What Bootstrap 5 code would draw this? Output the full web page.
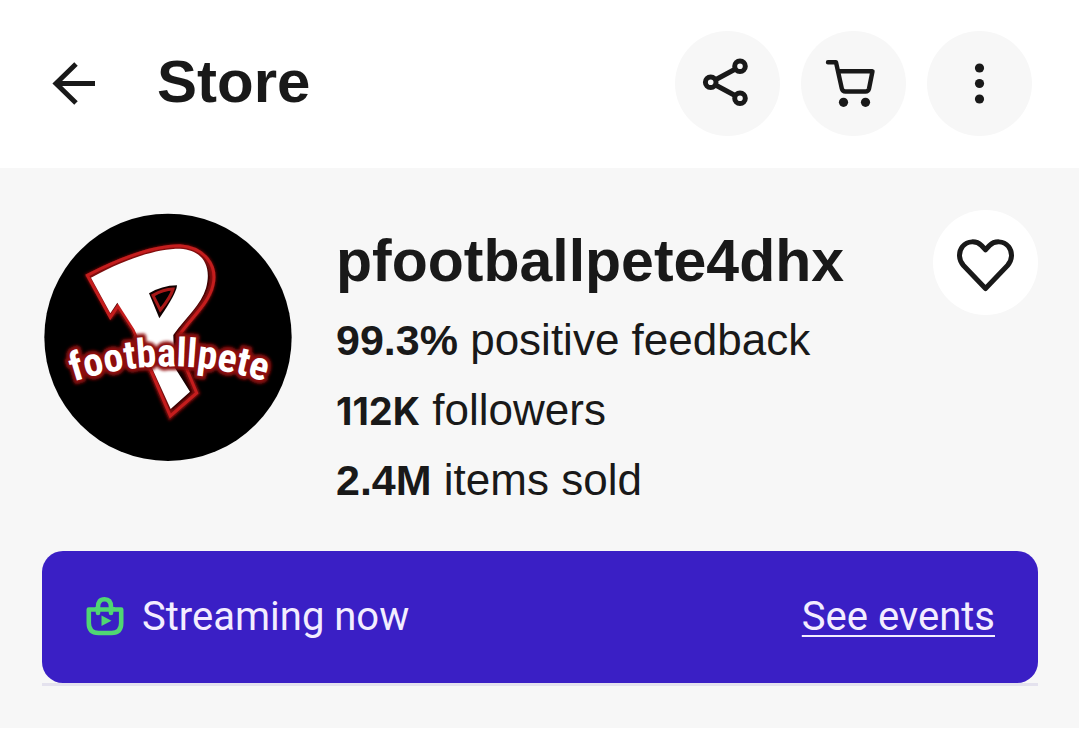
<!DOCTYPE html>
<html lang="en">
<head>
<meta charset="utf-8">
<meta name="viewport" content="width=device-width, initial-scale=1">
<title>Store</title>
<link href="https://cdn.jsdelivr.net/npm/bootstrap@5.3.0/dist/css/bootstrap.min.css" rel="stylesheet">
<style>
  body { font-family: "Liberation Sans", Arial, sans-serif; color: #191919; background: #fff; }
  .store-bar { padding: 31px 47px 32px 42px; }
  .back-btn { width: 63px; height: 63px; }
  .page-title, .seller-name { font-size: 60px; line-height: 70px; font-weight: 700; }
  .page-title { padding-left: 52px; margin-top: -4px; }
  .bar-actions { gap: 21px; }
  .round-btn { width: 105px; height: 105px; background: #f7f7f7; }
  .round-btn.on-grey { background: #fff; }
  .ink { fill: none; stroke: #191919; stroke-width: 5; }
  .profile { background: #f7f7f7; padding: 42px 41px 42px 42px; }
  .avatar { width: 250px; height: 250px; margin-top: 2px; }
  .seller-info { padding: 16px 0 19px 44px; }
  .seller-name { font-size: 59px; margin-bottom: 9px; }
  .stat { font-size: 44px; line-height: 70px; }
  .stat strong { font-size: 43px; font-weight: 700; line-height: 1; }
  .stat .count { font-family: Inter, "Liberation Sans", sans-serif; font-size: 38px; }
  .live-wrap { border-bottom: 3px solid #e4e2ee; margin-top: 17px; }
  .live-banner { background: #3a1fc5; border-radius: 21px; height: 132px; padding: 0 43px 0 44px; gap: 18px; font-family: Roboto, sans-serif; font-size: 40px; color: #f3edff; }
  .live-banner a { color: inherit; text-decoration: underline; text-decoration-thickness: 2px; text-underline-offset: 5px; text-decoration-skip-ink: none; }
  .logo-word { font-family: "Roboto Condensed", "Open Sans Condensed", "Liberation Sans", sans-serif; font-weight: 700; font-size: 120px; }
</style>
</head>
<body>
<header class="store-bar d-flex align-items-center">
  <button type="button" class="back-btn btn p-0 border-0 rounded-0" aria-label="Back">
    <svg width="63" height="63" viewBox="0 0 63 63" class="d-block" aria-hidden="true"><path class="ink" d="M34 12 14 31.500 34 51M14 31.500H53"/></svg>
  </button>
  <h1 class="page-title mb-0 me-auto">Store</h1>
  <div class="bar-actions d-flex">
    <button type="button" class="round-btn btn p-0 border-0 rounded-circle" aria-label="Share">
      <svg width="105" height="105" viewBox="0 0 105 105" class="d-block" aria-hidden="true"><g class="ink"><path d="M40.500 48.700 60.500 38M40.500 54 60.500 64.800"/><circle cx="35.700" cy="51.300" r="5.300"/><circle cx="65" cy="35.300" r="5.300"/><circle cx="65" cy="67.300" r="5.300"/></g></svg>
    </button>
    <button type="button" class="round-btn btn p-0 border-0 rounded-circle" aria-label="Cart">
      <svg width="105" height="105" viewBox="0 0 105 105" class="d-block" aria-hidden="true"><path d="M27 31.300H35L40.800 57.500Q41.500 60.500 44.500 60.500H64.500Q67.300 60.500 68 57.700L71.500 40.300H37.500" fill="none" stroke="#191919" stroke-width="4.400" stroke-linecap="round" stroke-linejoin="round"/><circle cx="42.500" cy="71.300" r="4.600" fill="#191919"/><circle cx="64.500" cy="71.300" r="4.600" fill="#191919"/></svg>
    </button>
    <button type="button" class="round-btn btn p-0 border-0 rounded-circle" aria-label="More options">
      <svg width="105" height="105" viewBox="0 0 105 105" class="d-block" fill="#191919" aria-hidden="true"><circle cx="52.500" cy="37" r="4.600"/><circle cx="52.500" cy="52.500" r="4.600"/><circle cx="52.500" cy="68" r="4.600"/></svg>
    </button>
  </div>
</header>

<main class="profile">
  <section class="d-flex align-items-start">
    <svg class="avatar flex-shrink-0" viewBox="36 36 750 750" role="img" aria-label="footballpete logo">
      <defs>
        <path id="arc" d="M90 559Q418 439 746 559"/>
        <filter id="soft" x="-10%" y="-20%" width="120%" height="140%"><feGaussianBlur stdDeviation="4"/></filter>
      </defs>
      <circle cx="414" cy="412" r="371" fill="#000"/>
      <g stroke-linejoin="miter">
        <path d="M176 228C290 170 380 141 450 141C520 146 560 195 545 258C532 312 482 352 448 405L463 490L500 579L421 648L310 388L266 322L243 347Z" fill="#160202" stroke="#8a1010" stroke-width="18" filter="url(#soft)"/>
        <path d="M172 226C290 165 380 137 450 137C522 142 563 195 549 255C537 310 485 352 448 405L463 490L500 579L421 648L310 388L264 318L241 352Z" fill="none" stroke="#c41d1d" stroke-width="9"/>
        <path d="M183 233C290 175 380 146 450 146C520 150 546 200 528 265C513 315 470 350 430 405L433 500L480 575L422 627L313 388L262 308L241 340Z" fill="#fff"/>
        <path d="M357 280Q395 257 441 256Q440 280 388 355Z" fill="#100"/>
        <path d="M369 286Q400 268 429 267Q423 290 391 330Z" fill="#000" stroke="#a81818" stroke-width="9"/>
      </g>
      <g class="logo-word" text-anchor="middle">
        <text fill="#8d1010" stroke="#8d1010" stroke-width="22" stroke-linejoin="round" filter="url(#soft)" aria-hidden="true"><textPath href="#arc" startOffset="50%">footballpete</textPath></text>
        <text fill="#fff"><textPath href="#arc" startOffset="50%">footballpete</textPath></text>
      </g>
    </svg>
    <div class="seller-info flex-grow-1">
      <h2 class="seller-name">pfootballpete4dhx</h2>
      <p class="stat mb-0"><strong>99.3%</strong> positive feedback</p>
      <p class="stat mb-0"><strong class="count">112K</strong> followers</p>
      <p class="stat mb-0"><strong>2.4M</strong> items sold</p>
    </div>
    <button type="button" class="round-btn on-grey btn p-0 border-0 rounded-circle flex-shrink-0" aria-label="Save this seller">
      <svg width="105" height="105" viewBox="0 0 105 105" class="d-block" aria-hidden="true"><path class="ink" stroke-linejoin="round" d="M52.500 78.500 30.500 55.500C25.500 50 25.200 42 29.500 36.500C34.500 30.500 43.500 30.500 48.500 35.500L52.500 39.800 56.500 35.500C61.500 30.500 70.500 30.500 75.500 36.500C79.800 42 79.500 50 74.500 55.500Z"/></svg>
    </button>
  </section>
  <section class="live-wrap">
    <div class="live-banner d-flex align-items-center">
      <svg width="38" height="42" viewBox="0 0 38 42" class="flex-shrink-0" aria-hidden="true"><g fill="none" stroke="#50d673" stroke-width="4.600" stroke-linecap="round" stroke-linejoin="round"><path d="M10 13.500H2.800V27Q2.800 37 12.500 37H25.500Q35.200 37 35.200 27V13.500H28M10.500 13.500H27.500"/><path d="M12 17V11Q12 3.200 18.500 3.200Q25 3.200 25 11V17"/></g><path d="M15.500 19.500V30L25.500 24.700Z" fill="#50d673"/></svg>
      <span class="me-auto">Streaming now</span>
      <a href="#events">See events</a>
    </div>
  </section>
</main>
<script src="https://cdn.jsdelivr.net/npm/bootstrap@5.3.0/dist/js/bootstrap.bundle.min.js"></script>
</body>
</html>
